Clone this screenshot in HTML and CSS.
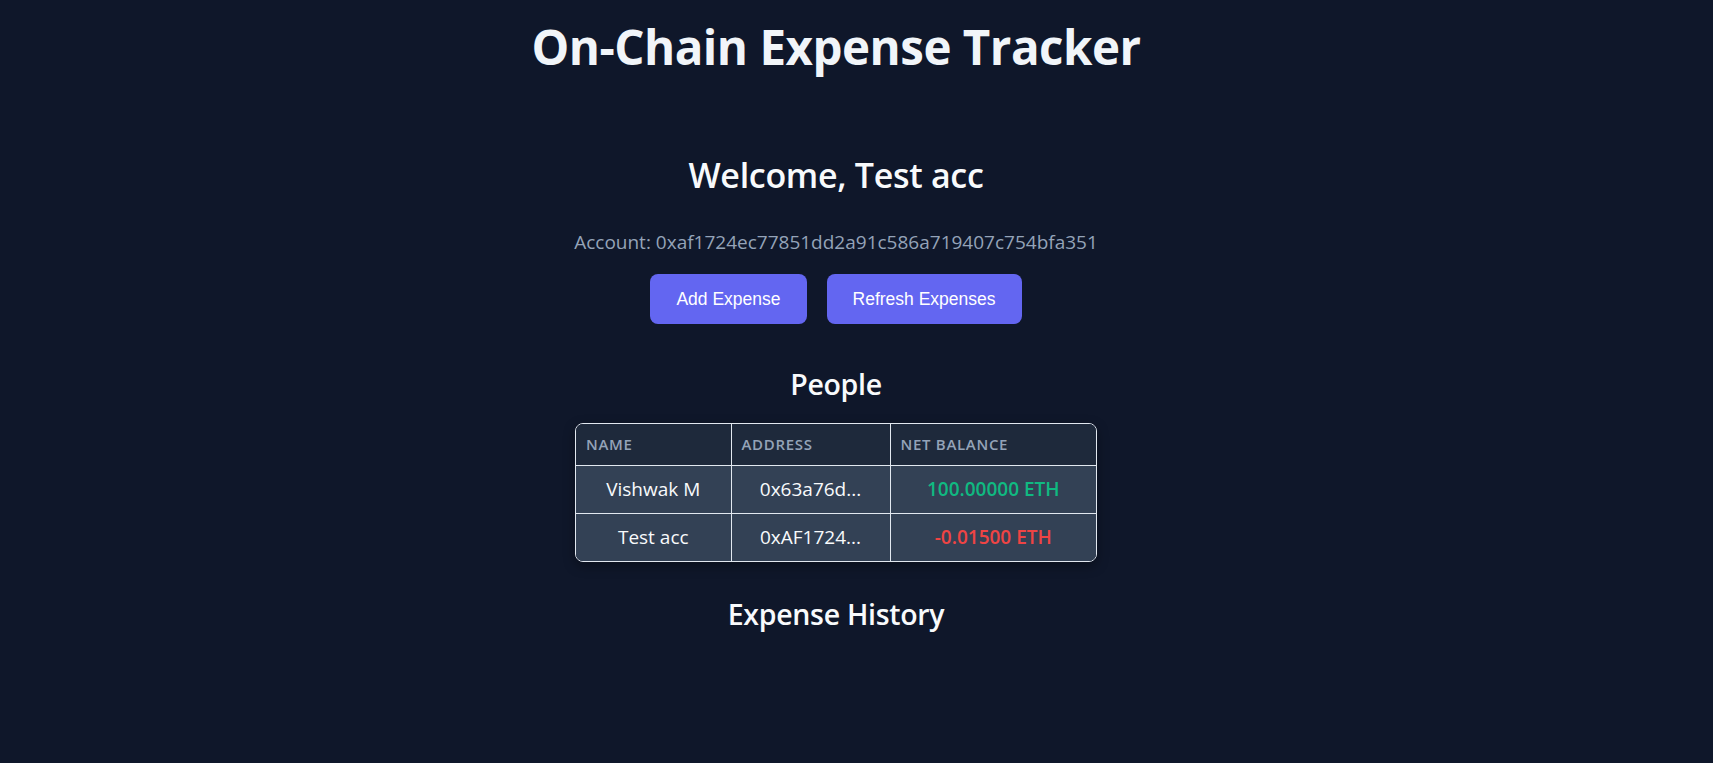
FILE: index.html
```html
<!DOCTYPE html>
<html lang="en">
<head>
<meta charset="utf-8">
<title>On-Chain Expense Tracker</title>
<link rel="stylesheet" href="styles.css">
</head>
<body>
<div class="app">
  <h1 class="title">On-Chain Expense Tracker</h1>
  <section class="dashboard">
    <h2 class="welcome">Welcome, Test acc</h2>
    <p class="account">Account: 0xaf1724ec77851dd2a91c586a719407c754bfa351</p>
    <div class="actions">
      <button class="btn btn-add">Add Expense</button>
      <button class="btn btn-refresh">Refresh Expenses</button>
    </div>
    <h3 class="section-title people-title">People</h3>
    <div class="table-wrap">
      <table class="people">
        <thead>
          <tr>
            <th class="col-name">Name</th>
            <th class="col-addr">Address</th>
            <th class="col-bal">Net Balance</th>
          </tr>
        </thead>
        <tbody>
          <tr>
            <td>Vishwak M</td>
            <td>0x63a76d...</td>
            <td class="pos">100.00000 ETH</td>
          </tr>
          <tr>
            <td>Test acc</td>
            <td>0xAF1724...</td>
            <td class="neg">-0.01500 ETH</td>
          </tr>
        </tbody>
      </table>
    </div>
    <h3 class="section-title history-title">Expense History</h3>
  </section>
</div>
</body>
</html>
```
FILE: styles.css
```css
html, body {
  margin: 0;
  padding: 0;
  background: #0f172a;
}
body {
  font-family: "Open Sans", "Noto Sans", sans-serif;
  color: #f8fafc;
  min-height: 763px;
}
.app {
  box-sizing: border-box;
  padding-right: 41px;
  display: flex;
  flex-direction: column;
  align-items: center;
}
.title {
  margin: 18px 0 0;
  font-size: 47.5px;
  font-weight: 700;
  line-height: 58px;
  letter-spacing: -0.5px;
  color: #f1f5f9;
}
.dashboard {
  display: flex;
  flex-direction: column;
  align-items: center;
}
.welcome {
  margin: 78px 0 0;
  font-size: 34px;
  font-weight: 600;
  line-height: 42px;
  letter-spacing: -0.3px;
}
.account {
  margin: 34px 0 0;
  font-size: 19px;
  line-height: 24px;
  color: #94a3b8;
}
.actions {
  display: flex;
  gap: 20px;
  margin-top: 20px;
}
.btn {
  font-family: "Liberation Sans", Arial, sans-serif;
  font-size: 17.5px;
  color: #ffffff;
  background: #6366f1;
  border: none;
  border-radius: 8px;
  height: 50px;
  padding: 0 26px;
}
.section-title {
  margin: 0;
  font-weight: 600;
  font-size: 28.5px;
  line-height: 36px;
  letter-spacing: -0.3px;
}
.people-title {
  margin-top: 42px;
}
.table-wrap {
  margin-top: 21px;
  width: 520px;
  border-radius: 8px;
  overflow: hidden;
  border: 1px solid #e2e8f0;
  box-shadow: 0 4px 12px rgba(0, 0, 0, 0.35);
}
.people {
  width: 100%;
  border-collapse: collapse;
  table-layout: fixed;
}
.people th, .people td {
  box-sizing: border-box;
  border: 1px solid #e2e8f0;
}
.people tr > :first-child { border-left: none; }
.people tr > :last-child { border-right: none; }
.people thead tr > * { border-top: none; }
.people tbody tr:last-child > * { border-bottom: none; }
.col-name { width: 155px; }
.col-addr { width: 159px; }
.people th {
  background: #1e293b;
  color: #94a3b8;
  text-transform: uppercase;
  text-align: left;
  font-size: 15px;
  font-weight: 600;
  letter-spacing: 0.7px;
  height: 41px;
  padding: 0 10px;
}
.people td {
  background: #334155;
  text-align: center;
  font-size: 19px;
  height: 48px;
  padding: 0 8px;
  color: #f8fafc;
}
.people td.pos {
  color: #10b981;
  font-weight: 600;
}
.people td.neg {
  color: #ef4444;
  font-weight: 600;
}
.history-title {
  margin-top: 34px;
}
```
